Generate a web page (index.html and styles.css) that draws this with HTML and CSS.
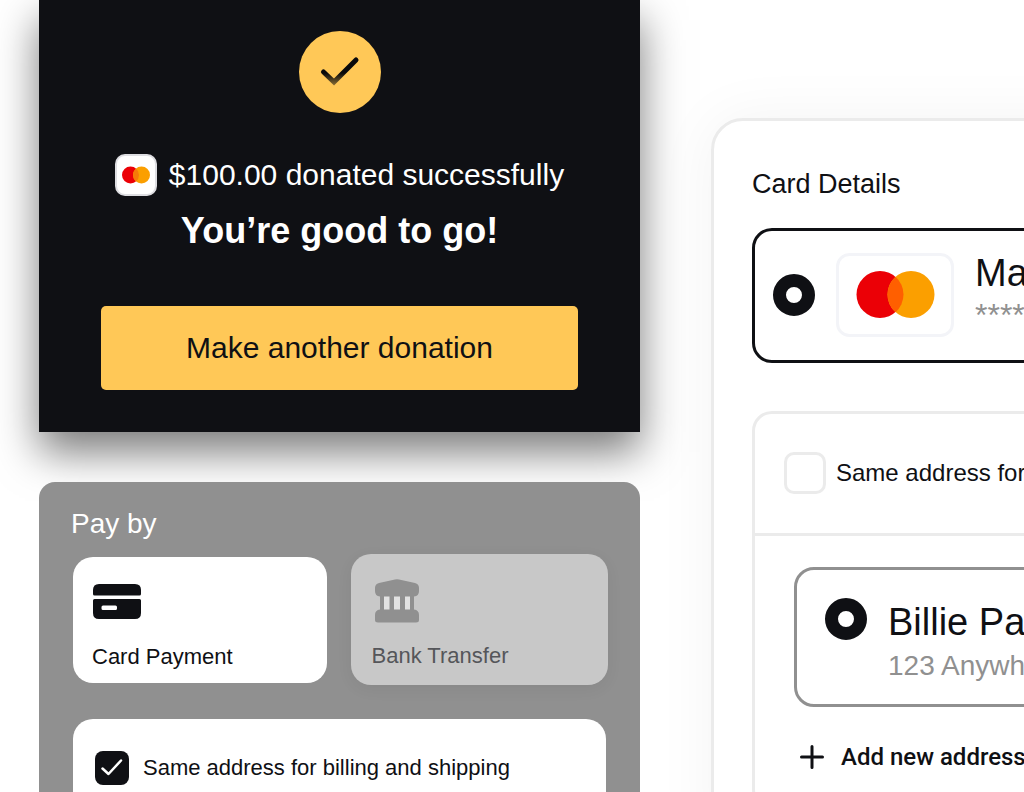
FILE: index.html
```html
<!DOCTYPE html>
<html lang="en">
<head>
<meta charset="utf-8">
<meta name="viewport" content="width=device-width, initial-scale=1">
<title>Donation checkout</title>
<link rel="stylesheet" href="styles.css">
</head>
<body>
<main class="board">
  <div class="column">
    <section class="receipt">
      <svg class="receipt-badge" viewBox="0 0 82 82" aria-hidden="true">
        <defs>
          <linearGradient id="tick-fade" gradientUnits="userSpaceOnUse" x1="0" y1="42" x2="0" y2="56">
            <stop offset="0" stop-color="#08090b"/>
            <stop offset="1" stop-color="#9b7a38"/>
          </linearGradient>
        </defs>
        <circle cx="41" cy="41" r="41" fill="#ffc857"/>
        <path d="M24.500 41 L35 51 L57 29" fill="none" stroke="url(#tick-fade)" stroke-width="5" stroke-linecap="round"/>
      </svg>
      <p class="receipt-line">
        <svg class="receipt-card" viewBox="0 0 42 42" role="img" aria-label="Mastercard">
          <rect x="1" y="1" width="40" height="40" rx="9" fill="#fff" stroke="#dedee2" stroke-width="2"/>
          <circle cx="15.500" cy="21" r="8.500" fill="#eb0006"/>
          <circle cx="26.500" cy="21" r="8.500" fill="#fb9f00"/>
          <path d="M21 14.500 A8.500 8.500 0 0 1 21 27.500 A8.500 8.500 0 0 1 21 14.500Z" fill="#f67a08"/>
        </svg>
        <span>$100.00 donated successfully</span>
      </p>
      <h1 class="receipt-title">You’re good to go!</h1>
      <button class="receipt-button" type="button">Make another donation</button>
    </section>

    <section class="pay">
      <h2 class="pay-title">Pay by</h2>
      <div class="pay-methods">
        <button class="method" type="button">
          <svg class="method-icon" viewBox="0 0 50 44" aria-hidden="true">
            <path d="M7 4 H43 Q49 4 49 10 V14 Q49 15.500 47.500 15.500 H2.500 Q1 15.500 1 14 V10 Q1 4 7 4Z" fill="#0f1014"/>
            <path fill-rule="evenodd" d="M2.500 19 H47.500 Q49 19 49 20.500 V33 Q49 39 43 39 H7 Q1 39 1 33 V20.500 Q1 19 2.500 19Z M11 25.500 Q9.500 25.500 9.500 27 V28.500 Q9.500 30 11 30 H23.500 Q25 30 25 28.500 V27 Q25 25.500 23.500 25.500Z" fill="#0f1014"/>
          </svg>
          <span>Card Payment</span>
        </button>
        <button class="method method-muted" type="button">
          <svg class="method-icon" viewBox="0 0 50 44" aria-hidden="true">
            <path d="M23 .5 Q25 0 27 .5 L43 4 Q47 5 47 9 V12 Q47 17 42 17.500 V30.500 Q47 31 47 36 V41 Q47 43.500 44 43.500 H6 Q3 43.500 3 41 V36 Q3 31 8 30.500 V17.500 Q3 17 3 12 V9 Q3 5 7 4Z" fill="#909090"/>
            <path d="M12 17.500H17.500V30.500H12ZM22 17.500H28V30.500H22ZM33 17.500H38V30.500H33Z" fill="#e2e2e2"/>
          </svg>
          <span>Bank Transfer</span>
        </button>
      </div>
      <div class="billing">
        <input class="check check-dark" type="checkbox" id="billing-same" checked>
        <label for="billing-same">Same address for billing and shipping</label>
      </div>
    </section>
  </div>

  <section class="details">
    <h2 class="details-title">Card Details</h2>
    <div class="card-option">
      <input class="radio" type="radio" name="card" id="card-main" checked>
      <svg class="card-logo" viewBox="0 0 118 84" aria-hidden="true">
        <rect x="1.500" y="1.500" width="115" height="81" rx="12" fill="#fff" stroke="#f3f4f8" stroke-width="3"/>
        <circle cx="44" cy="41.500" r="23.500" fill="#eb0006"/>
        <circle cx="75" cy="41.500" r="23.500" fill="#fb9f00"/>
        <path d="M59.500 23.840 A23.500 23.500 0 0 1 59.500 59.160 A23.500 23.500 0 0 1 59.500 23.840Z" fill="#ff5f00"/>
      </svg>
      <label class="option-text" for="card-main">
        <span class="option-name">Mastercard</span>
        <span class="option-digits">**** ****</span>
      </label>
    </div>

    <div class="address">
      <div class="address-same">
        <input class="check check-light" type="checkbox" id="address-same">
        <label for="address-same">Same address for billing</label>
      </div>
      <div class="address-list">
        <div class="address-option">
          <input class="radio" type="radio" name="address" id="address-main" checked>
          <label class="option-text" for="address-main">
            <span class="option-name">Billie Payne</span>
            <span class="option-street">123 Anywhere St</span>
          </label>
        </div>
        <button class="add" type="button">
          <svg class="add-icon" viewBox="0 0 24 24" aria-hidden="true"><path d="M12 1.500V22.500M1.500 12H22.500" stroke="#0f1014" stroke-width="3" stroke-linecap="round"/></svg>
          <span>Add new address</span>
        </button>
      </div>
    </div>
  </section>
</main>
</body>
</html>
```
FILE: styles.css
```css
* {
  box-sizing: border-box;
}

body {
  margin: 0;
  background: #fff;
  color: #0f1014;
  font-family: "Liberation Sans", Arial, sans-serif;
  font-size: 22px;
}

h1, h2, p {
  margin: 0;
  font-weight: 400;
}

button {
  border: 0;
  color: inherit;
  font: inherit;
  cursor: pointer;
}

svg {
  display: block;
  flex: none;
}

.board {
  display: grid;
  grid-template-columns: minmax(0, 601fr) minmax(0, 313fr);
  gap: 71px;
  height: 100vh;
  padding-left: 39px;
  overflow: hidden;
}

.column {
  display: flex;
  flex-direction: column;
  gap: 50px;
  min-width: 0;
}

/* Receipt */
.receipt {
  display: flex;
  flex-direction: column;
  align-items: center;
  padding: 31px 62px 42px;
  background: #0f1014;
  color: #fff;
  box-shadow: 0 20px 40px rgba(0, 0, 0, 0.52);
}

.receipt-badge {
  width: 82px;
  height: 82px;
}

.receipt-line {
  display: flex;
  align-items: center;
  gap: 12px;
  margin-top: 41px;
  font-size: 30px;
  line-height: 42px;
  white-space: nowrap;
}

.receipt-card {
  width: 42px;
  height: 42px;
}

.receipt-title {
  margin-top: 15px;
  font-size: 36px;
  line-height: 40px;
  font-weight: 700;
}

.receipt-button {
  align-self: stretch;
  height: 84px;
  margin-top: 55px;
  border-radius: 5px;
  background: #ffc857;
  color: #0f1014;
  font-size: 30px;
}

/* Payment method */
.pay {
  position: relative;
  flex: 1 0 auto;
  padding: 24px 32px;
  border-radius: 16px 16px 0 0;
  background: #909090;
}

.pay-title {
  color: #fff;
  font-size: 28px;
  line-height: 36px;
}

.pay-methods {
  display: grid;
  grid-template-columns: 254fr 258fr;
  align-items: center;
  gap: 24px;
  margin: 12px 0 34px 2px;
}

.method {
  display: flex;
  flex-direction: column;
  align-items: flex-start;
  gap: 20px;
  padding: 23px 19px 13px;
  border-radius: 20px;
  background: #fff;
  line-height: 26px;
}

.method-muted {
  padding: 25px 21px 16px;
  background: #c8c8c8;
  color: #55565a;
  box-shadow: 0 4px 16px rgba(0, 0, 0, 0.06);
}

.method-icon {
  width: 50px;
  height: 44px;
}

.billing {
  display: flex;
  align-items: center;
  gap: 14px;
  margin: 0 2px;
  padding: 32px 22px;
  border-radius: 20px;
  background: #fff;
}

/* Form controls */
.check,
.radio {
  flex: none;
  appearance: none;
  margin: 0;
}

.check-dark {
  width: 34px;
  height: 34px;
  border-radius: 8px;
  background: #0f1014 url("data:image/svg+xml,%3Csvg xmlns='http://www.w3.org/2000/svg' viewBox='0 0 34 34'%3E%3Cpath d='M7.500 17.500L13.500 23L26 9.500' fill='none' stroke='white' stroke-width='2.500' stroke-linecap='round' stroke-linejoin='round'/%3E%3C/svg%3E") center / contain;
}

.check-light {
  width: 42px;
  height: 42px;
  border: 3px solid #ebebeb;
  border-radius: 10px;
  background: #fff;
}

.radio {
  width: 42px;
  height: 42px;
  border: 13px solid #0f1014;
  border-radius: 50%;
  background: #fff;
}

/* Card details */
.details {
  width: 640px;
  margin-top: 118px;
  padding: 45px 38px;
  border: 3px solid #ebebeb;
  border-radius: 32px;
  background: #fff;
  box-shadow: 0 0 60px rgba(0, 0, 0, 0.05);
}

.details-title {
  font-size: 27px;
  line-height: 36px;
}

.card-option {
  display: flex;
  align-items: center;
  gap: 21px;
  margin-top: 26px;
  padding: 22px 18px 23px;
  border: 3px solid #0f1014;
  border-radius: 20px;
}

.card-logo {
  width: 118px;
  height: 84px;
}

.option-text {
  display: flex;
  flex-direction: column;
  white-space: nowrap;
}

.option-name {
  font-size: 38px;
  line-height: 40px;
}

.option-digits {
  color: #909090;
  font-size: 32px;
  line-height: 44px;
}

.option-street {
  color: #909090;
  font-size: 28px;
  line-height: 48px;
}

.address {
  margin-top: 48px;
  border: 3px solid #ebebeb;
  border-radius: 20px;
}

.address-same {
  display: flex;
  align-items: center;
  gap: 10px;
  padding: 38px 29px 39px;
  border-bottom: 3px solid #ebebeb;
  font-size: 24px;
}

.address-list {
  padding: 31px 39px;
}

.address-option {
  display: flex;
  align-items: flex-start;
  gap: 21px;
  padding: 28px 28px 14px;
  border: 3px solid #909090;
  border-radius: 20px;
}

.address-option .option-text {
  padding-top: 4px;
}

.add {
  display: flex;
  align-items: center;
  gap: 17px;
  margin-top: 32px;
  padding: 0 6px;
  background: none;
  font-family: Roboto, "Liberation Sans", sans-serif;
  font-size: 24px;
  font-weight: 500;
  line-height: 36px;
}

.add-icon {
  width: 24px;
  height: 24px;
}
```
